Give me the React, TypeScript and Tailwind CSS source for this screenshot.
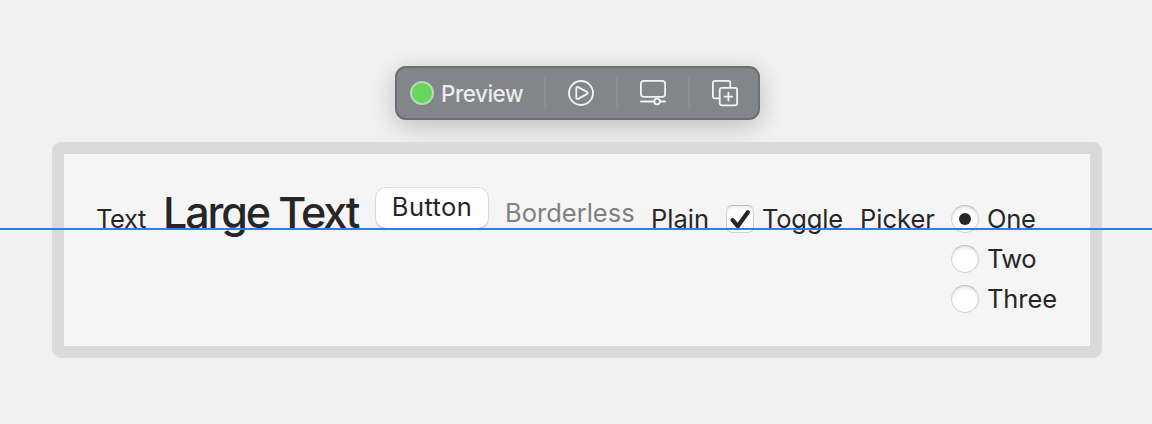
import type { ReactNode } from "react";

function Radio({ label, checked = false, spacing }: { label: string; checked?: boolean; spacing: string }) {
  return (
    <div role="radio" aria-checked={checked} className="flex h-10 items-start">
      <span className="mt-[2px] flex size-7 shrink-0 items-center justify-center rounded-full border border-[#d2d2d2] border-t-[#bababa] bg-white shadow-[inset_0_2px_3px_rgba(0,0,0,0.10)]">
        {checked && <span className="size-3 rounded-full bg-[#262626]" />}
      </span>
      <span className={`ml-2 whitespace-nowrap ${spacing}`}>{label}</span>
    </div>
  );
}

function Tool({ label, children }: { label: string; children: ReactNode }) {
  return (
    <button aria-label={label} className="flex h-[34px] w-[72px] shrink-0 items-center justify-center border-l-2 border-[#8a8c90]">
      <svg width="28" height="28" viewBox="0 0 28 28" fill="none" stroke="#f3f3f4" strokeWidth="1.8" strokeLinecap="round" strokeLinejoin="round">
        {children}
      </svg>
    </button>
  );
}

export default function App() {
  return (
    <main className="relative flex h-[424px] w-[1152px] flex-col overflow-hidden bg-[#f1f1f1] pt-[66px] font-['Inter',sans-serif] text-[25.5px] leading-8 text-[#262626]">
      <div className="ml-[395px] flex h-[54px] w-[365px] shrink-0 items-center rounded-[11px] border-2 border-[#6c6f73] bg-[#828589] shadow-[0_6px_26px_rgba(0,0,0,0.22)]">
        <span className="ml-[13px] size-6 shrink-0 rounded-full border-2 border-[#b7d9b3] bg-[#68d65d]" />
        <span className="ml-[7px] w-[103px] shrink-0 pt-px text-[22.5px] font-medium tracking-[-0.5px] text-[#ececed]">Preview</span>
        <Tool label="Live preview">
          <circle cx="14" cy="14" r="12" />
          <path d="M9.3 9.1v9.8c0 1 .9 1.5 1.8 1l8.8-4.8c1-.6 1-1.6 0-2.2l-8.8-4.8c-.9-.5-1.8 0-1.8 1Z" />
        </Tool>
        <Tool label="Device settings">
          <rect x="1.9" y="1.9" width="24.2" height="16" rx="2.8" />
          <path d="M1.9 22.5h13.4M20.9 22.5h5.2" />
          <circle cx="18.1" cy="22.5" r="2.8" />
        </Tool>
        <Tool label="Duplicate preview">
          <path d="M8.5 19.4H3.9a2 2 0 0 1-2-2V3.9a2 2 0 0 1 2-2h13.4a2 2 0 0 1 2 2v4.6" />
          <rect x="8.7" y="8.9" width="17.4" height="17.4" rx="2" />
          <path d="M17.4 13.7v7.8M13.5 17.6h7.8" />
        </Tool>
      </div>

      <section className="mt-[22px] ml-[52px] flex h-[216px] w-[1050px] shrink-0 items-start rounded-[9px] border-[12px] border-[#dadada] bg-[#f5f5f5] pt-[49px] pl-8">
        <span className="w-[67px] shrink-0 tracking-[-0.4px]">Text</span>
        <span className="-mt-[17px] w-[213px] shrink-0 whitespace-nowrap text-[43px] leading-[52px] font-[450] tracking-[-2.1px]">Large Text</span>
        <button className="-mt-[15px] h-10 w-28 shrink-0 rounded-[10px] bg-white pb-[2px] tracking-[0.4px] shadow-[0_0_0_1px_rgba(0,0,0,0.07),0_1px_2px_rgba(0,0,0,0.18)]">Button</button>
        <button className="-mt-[6px] ml-[17px] w-[146px] shrink-0 text-left tracking-[0px] text-[#808080]">Borderless</button>
        <button className="w-[75px] shrink-0 text-left tracking-[0px]">Plain</button>
        <label className="flex w-[134px] shrink-0">
          <span className="mt-[2px] mr-[8px] flex size-7 shrink-0 items-center justify-center rounded-[6px] border border-[#d2d2d2] border-t-[#bababa] bg-white shadow-[inset_0_2px_3px_rgba(0,0,0,0.08)]">
            <svg width="26" height="26" viewBox="0 0 26 26" fill="none" stroke="#262626" strokeWidth="4.2" strokeLinecap="round" strokeLinejoin="round">
              <path d="m5.6 14.2 5.2 6L20.8 6.2" />
            </svg>
          </span>
          <span className="tracking-[-0.2px]">Toggle</span>
        </label>
        <span className="w-[91px] shrink-0 tracking-[0px]">Picker</span>
        <div role="radiogroup" aria-label="Picker">
          <Radio label="One" checked spacing="tracking-[-0.3px]" />
          <Radio label="Two" spacing="tracking-[-0.5px]" />
          <Radio label="Three" spacing="tracking-[-0.1px]" />
        </div>
      </section>

      <div className="absolute top-[228px] left-0 h-[2px] w-full bg-[#2c7cf3]" />
    </main>
  );
}
